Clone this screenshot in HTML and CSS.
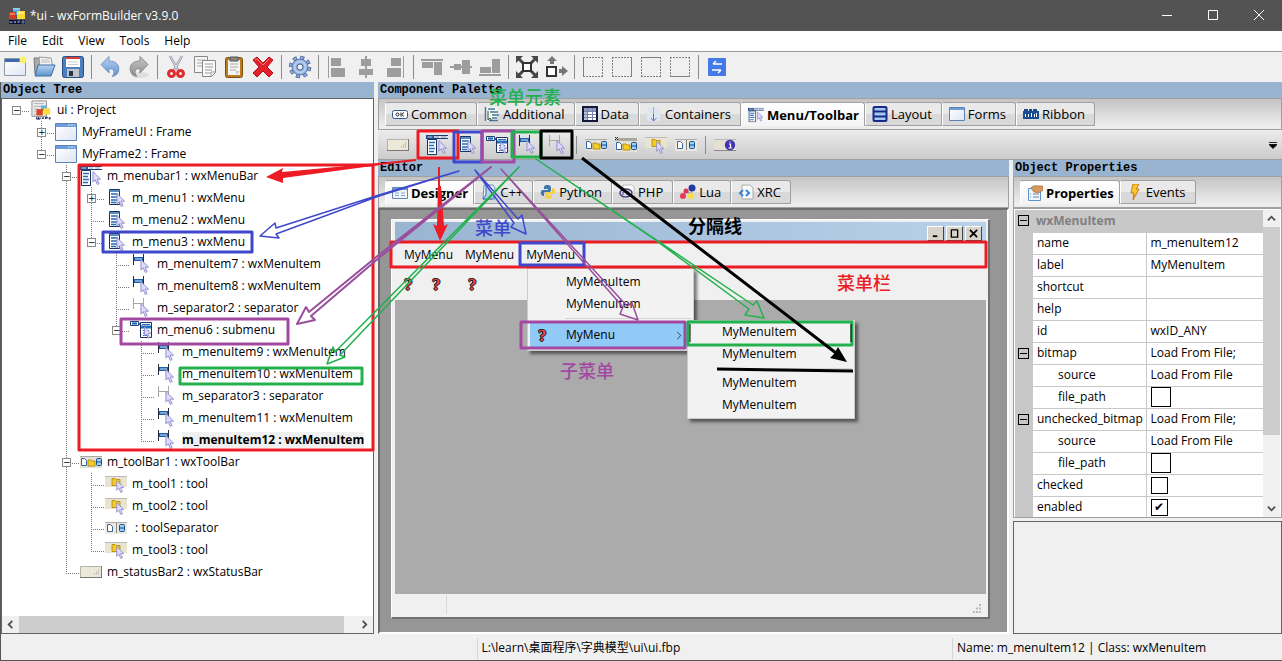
FILE: index.html
```html
<!DOCTYPE html>
<html lang="en">
<head>
<meta charset="utf-8">
<title>*ui - wxFormBuilder v3.9.0</title>
<link rel="stylesheet" href="styles.css">
</head>
<body>
<svg class="defs" aria-hidden="true">
  <defs>
    <linearGradient id="gBlue" x1="0" y1="0" x2="0" y2="1"><stop offset="0" stop-color="#b9d3f0"/><stop offset="1" stop-color="#5f93cf"/></linearGradient>
    <linearGradient id="gGrey" x1="0" y1="0" x2="0" y2="1"><stop offset="0" stop-color="#c8c8c8"/><stop offset="1" stop-color="#8c8c8c"/></linearGradient>
    <linearGradient id="gPaper" x1="0" y1="0" x2="1" y2="1"><stop offset="0" stop-color="#ffffff"/><stop offset="1" stop-color="#dfe6f4"/></linearGradient>
    <symbol id="cursor" viewBox="0 0 8 12"><path d="M.5 .5v9l2-2 1.700 4 1.600-.700-1.700-3.800h3z" fill="#dcdaff" stroke="#8f8cc8" stroke-width=".8"/></symbol>
    <symbol id="blocks" viewBox="0 0 16 16"><path d="M4 0h7v7H4z" fill="#4da3e0"/><path d="M0 4h7v7H0z" fill="#d83a1e"/><path d="M8 3h8v8H8z" fill="#fbd92c"/><path d="M4 0h7v2H4z" fill="#8fcaf0"/><path d="M9 4h6v2H9z" fill="#fff08a"/><path d="M1 5h5v2H1z" fill="#f07a5c"/><path d="M0 12h16v4H0z" fill="#0d1232"/><path d="M1 13v2l1-1 1 1v-2M5 13l2 2m0-2-2 2M9 15v-2h2m-2 1h2M13 13v2h2v-2z" fill="none" stroke="#9fa6d8" stroke-width=".7"/></symbol>
    <symbol id="project" viewBox="0 0 22 22"><path d="M1 1h16v17H1z" fill="#eee" stroke="#888"/><path d="M3 4h11M3 7h8M3 10h5M3 13h5M3 16h4" stroke="#aaa"/><path d="M11 6h6v6h-6z" fill="#5fb4e6"/><path d="M6 10h7v7H6z" fill="#d94424"/><path d="M14 9h7v7h-7z" fill="#fadb3a"/><path d="M6 19v2h2v-2 2h2v-2M12 19l2 2m0-2-2 2M16 19v2m0-2h2v1h-2M20 19v2h1v-2" stroke="#11164e" fill="none"/></symbol>
    <symbol id="frame" viewBox="0 0 22 18"><path d="M.5 .5h21v17H.5z" fill="url(#gPaper)" stroke="#5b82b8"/><path d="M1 1h20v3H1z" fill="#6f9bd6"/><path d="M13 2h2m1 0h2m1 0h1" stroke="#dcebff"/></symbol>
    <symbol id="menubar" viewBox="0 0 22 20"><path d="M0 0h8v4H0z" fill="#1c4a8c"/><path d="M1.500 2h5" stroke="#cfe0f2"/><path d="M8 .5h14M8 3.500h14" stroke="#1b3a70"/><path d="M9 2h4m2 0h5" stroke="#7fa3cc"/><path d="M1.500 4.500h9v15h-9z" fill="#fff" stroke="#17305e"/><path d="M3 7.500h6M3 10.500h5M3 13.500h6M3 16.500h5" stroke="#2b6cb4" stroke-width="1.500"/><use href="#cursor" x="12" y="5" width="10" height="14"/></symbol>
    <symbol id="menu" viewBox="0 0 22 20"><path d="M4.500 1.500h10v15h-10z" fill="#fff" stroke="#17305e"/><path d="M4 3h11M6 6h7M6 9h6M6 12h7M6 14.500h5" stroke="#2468b0" stroke-width="1.500"/><use href="#cursor" x="11" y="5" width="10" height="14"/></symbol>
    <symbol id="submenu" viewBox="0 0 22 20"><path d="M.5 1.500h8v4h-8z" fill="#fff" stroke="#1b3f7d"/><path d="M2 3.500h5M8 4h3" stroke="#1b5aa6" stroke-width="2"/><path d="M10.500 2.500h11v15h-11z" fill="#fff" stroke="#17305e"/><path d="M11 7h10" stroke="#246fc0" stroke-width="3"/><path d="M12 4.500h8M13 10.500h6M13 13h6M13 15.500h6" stroke="#2468b0"/><use href="#cursor" x="14" y="6" width="8" height="13"/></symbol>
    <symbol id="item" viewBox="0 0 22 20"><path d="M3.500 0v11M13.500 0v11" stroke="#222b3a"/><path d="M4 5h9" stroke="#1c5fa8" stroke-width="4"/><path d="M5 5h7" stroke="#d6e6f5"/><use href="#cursor" x="10" y="5" width="10" height="14"/></symbol>
    <symbol id="separator" viewBox="0 0 22 20"><path d="M3.500 0v11M13.500 0v11M4 5.500h9" stroke="#aaa89c"/><use href="#cursor" x="10" y="5" width="10" height="14"/></symbol>
    <symbol id="toolbar" viewBox="0 0 22 12"><path d="M0 0h22v12H0z" fill="#e4e1d3"/><path d="M0 .5h22" stroke="#aaa"/><path d="M1.500 2.500h3l2 2v5h-5z" fill="#fff" stroke="#3565a4"/><path d="M8 4h3l1 1h3v5H8z" fill="#f5ce22" stroke="#a8800b" stroke-width=".8"/><rect x="16.500" y="2.500" width="5" height="7" rx="1" fill="#9fd0f0" stroke="#174b92"/><path d="M17 6h4" stroke="#174b92"/></symbol>
    <symbol id="tool" viewBox="0 0 22 18"><path d="M0 1h22v11H0z" fill="#e8e4d0"/><path d="M0 1.500h22" stroke="#bbb"/><path d="M7 3.500h3l1 1h4v6H7z" fill="#f3cc28" stroke="#b08400" stroke-width=".8"/><use href="#cursor" x="11" y="5" width="9" height="13"/></symbol>
    <symbol id="toolsep" viewBox="0 0 22 12"><path d="M0 0h22v12H0z" fill="#eceadf"/><path d="M0 .5h22" stroke="#aaa"/><path d="M2.500 2.500h3l2 2v5h-5z" fill="#fff" stroke="#3565a4"/><path d="M11.500 1v10" stroke="#888"/><rect x="14.500" y="2.500" width="5" height="7" rx="1" fill="#9fd0f0" stroke="#174b92"/><path d="M15 6h4" stroke="#174b92"/></symbol>
    <symbol id="statusbar" viewBox="0 0 22 12"><path d="M.5 .5h21v11H.5z" fill="#ece9d8" stroke="#b5b3a5"/><path d="M0 11.500h22M21.500 0v12" stroke="#777"/><path d="M18 4h1M16 6h1m1 0h1M14 8h1m1 0h1m1 0h1" stroke="#999"/></symbol>
    <symbol id="info" viewBox="0 0 22 12"><path d="M0 0h22v12H0z" fill="#e4e1d3"/><path d="M0 .5h22" stroke="#bbb"/><path d="M0 11.500h22" stroke="#888"/><circle cx="16" cy="6" r="5.200" fill="#4036b4"/><path d="M15 5h1.500v4M16 2.500v1M14.500 9h3.500" stroke="#fff" stroke-width="1.200" fill="none"/></symbol>
  </defs>
</svg>

<header class="titlebar">
  <svg class="i16" viewBox="0 0 16 16"><use href="#blocks"/></svg>
  <h1>*ui - wxFormBuilder v3.9.0</h1>
  <button class="win" aria-label="Minimize"><svg viewBox="0 0 12 12"><path d="M1 5.500h10"/></svg></button>
  <button class="win" aria-label="Maximize"><svg viewBox="0 0 12 12"><path d="M1.500 .5h9v9h-9z"/></svg></button>
  <button class="win" aria-label="Close"><svg viewBox="0 0 12 12"><path d="m1 0 10 10M11 0 1 10"/></svg></button>
</header>
<nav class="menubar"><button>File</button><button>Edit</button><button>View</button><button>Tools</button><button>Help</button></nav>

<div class="toolbar">
  <button aria-label="New"><svg viewBox="0 0 24 24"><path d="M1.500 3.500h21v17h-21z" fill="url(#gPaper)" stroke="#8e97a8"/><path d="M2 4h20v3H2z" fill="#3d68ae"/><circle cx="20" cy="5" r="3.500" fill="#f7f26a"/></svg></button>
  <button aria-label="Open"><svg viewBox="0 0 24 24"><path d="M2 3h8l2 3h7v13H3z" fill="#aaa" stroke="#777"/><path d="m7 2 12 1 2 10H8z" fill="#f4f4f4" stroke="#999"/><path d="M9 5h8M9 7h9" stroke="#bbb"/><path d="M6 10h17l-4 11H3z" fill="url(#gBlue)" stroke="#3c6eaa"/></svg></button>
  <button aria-label="Save"><svg viewBox="0 0 24 24"><rect x="1.500" y="1.500" width="21" height="21" rx="2" fill="#4b7fc0" stroke="#274e87"/><path d="M5 2h14v10H5z" fill="#fff"/><path d="M5 2h14v2H5z" fill="#e23b35"/><path d="M7 7h10M7 9.500h10" stroke="#ccc"/><path d="M6 14h12v8H6z" fill="#bfc4ca"/><path d="M8 16h4v5H8z" fill="#27344a"/></svg></button>
  <hr>
  <button aria-label="Undo"><svg viewBox="0 0 24 24"><path d="m3 9.500 8-8V6c7 0 11 4 9.500 10-.500 3-3 5-6.500 5.500 3-3 3-8-3-8V18z" fill="url(#gBlue)" stroke="#7398c5"/></svg></button>
  <button aria-label="Redo"><svg viewBox="0 0 24 24"><ellipse cx="13" cy="20" rx="9" ry="3" fill="#ddd"/><path d="m21 9.500-8-8V6C6 6 2 10 3.500 16c.5 3 3 5 6.500 5.500-3-3-3-8 3-8V18z" fill="url(#gGrey)" stroke="#8c8c8c"/></svg></button>
  <hr>
  <button aria-label="Cut"><svg viewBox="0 0 24 24"><path d="m6 1 8 14M18 1l-8 14" stroke="#8a929c" stroke-width="2.500"/><path d="m6 1 8 14M18 1l-8 14" stroke="#e4e8ec"/><ellipse cx="7.500" cy="18.500" rx="3" ry="3" fill="none" stroke="#e02b2f" stroke-width="3"/><ellipse cx="16.500" cy="18.500" rx="3" ry="3" fill="none" stroke="#e02b2f" stroke-width="3"/></svg></button>
  <button aria-label="Copy"><svg viewBox="0 0 24 24"><path d="M1.500 1.500h13v16h-13z" fill="#f5f5f5" stroke="#888"/><path d="M4 5h8M4 8h8M4 11h8" stroke="#aaa"/><path d="M9.500 5.500h13v12l-4 4h-9z" fill="#fafafa" stroke="#888"/><path d="M12 9h8M12 12h8M12 15h7M12 18h5M18 21v-4h4" stroke="#999" fill="none"/></svg></button>
  <button aria-label="Paste"><svg viewBox="0 0 24 24"><rect x="3.500" y="2.500" width="17" height="20" rx="2" fill="#ba7d20" stroke="#7b4d08"/><path d="M6 5h12v15H6z" fill="#f4f4f0"/><path d="M8 2h8v4H8z" fill="#888" stroke="#555"/><path d="M8 9h8M8 12h8M8 15h6" stroke="#aaa"/><path d="M14 20v-4h4z" fill="#ccc"/></svg></button>
  <button aria-label="Delete"><svg viewBox="0 0 24 24"><path d="m2 5 4-3 6 6 6-6 4 3-6 7 6 6-4 4-6-6-6 6-4-4 6-6z" fill="#e1222a" stroke="#b40e16"/><path d="m4 5 2-1 6 6 6-6" stroke="#f58084" fill="none"/></svg></button>
  <hr>
  <button aria-label="Preferences"><svg viewBox="0 0 24 24"><circle cx="12" cy="12" r="9.500" fill="none" stroke="#4a689e" stroke-width="3.500" stroke-dasharray="4 3.460"/><circle cx="12" cy="12" r="9.500" fill="none" stroke="#94b0dd" stroke-width="2" stroke-dasharray="2.500 4.960" stroke-dashoffset="-.7"/><circle cx="12" cy="12" r="8" fill="#94b0dd" stroke="#5877ae"/><circle cx="12" cy="12" r="5.500" fill="none" stroke="#b9cdee" stroke-width="2"/><circle cx="12" cy="12" r="3" fill="#eee" stroke="#48679f"/></svg></button>
  <hr>
  <button aria-label="Align left"><svg viewBox="0 0 24 24" fill="#9d9d9d"><path d="M3 1h1v22H3zM6 3h10v8H6zM6 13h14v9H6z"/></svg></button>
  <button aria-label="Center horizontally"><svg viewBox="0 0 24 24" fill="#9d9d9d"><path d="M11 1h2v22h-2zM7 4h10v7H7zM5 14h14v6H5z"/></svg></button>
  <button aria-label="Align right"><svg viewBox="0 0 24 24" fill="#9d9d9d"><path d="M20 1h1v22h-1zM8 3h10v8H8zM4 13h14v9H4z"/></svg></button>
  <hr>
  <button aria-label="Align top"><svg viewBox="0 0 24 24" fill="#9d9d9d"><path d="M1 4h22v2H1zM2 7h11v6H2zM14 7h8v13h-8z"/></svg></button>
  <button aria-label="Center vertically"><svg viewBox="0 0 24 24" fill="#9d9d9d"><path d="M1 11h22v2H1zM5 9h7v6H5zM13 5h8v14h-8z"/></svg></button>
  <button aria-label="Align bottom"><svg viewBox="0 0 24 24" fill="#9d9d9d"><path d="M1 19h22v2H1zM2 12h11v6H2zM14 4h8v14h-8z"/></svg></button>
  <hr>
  <button aria-label="Expand"><svg viewBox="0 0 24 24"><path d="m3 3 18 18M21 3 3 21" stroke="#474747" stroke-width="3"/><path d="M1 1h7L1 8zM23 1v7l-7-7zM1 23v-7l7 7zM23 23h-7l7-7z" fill="#474747"/><path d="M8 8h8v8H8z" fill="#fff" stroke="#333" stroke-width="2"/></svg></button>
  <button aria-label="Stretch"><svg viewBox="0 0 24 24"><path d="M3 12h9v9H3z" fill="#fff" stroke="#333" stroke-width="2"/><path d="M6 9V6H3l5-5 5 5h-3v3zM15 14h3v-3l6 5-6 5v-3h-3z" fill="#777"/></svg></button>
  <hr>
  <button aria-label="Left border"><svg viewBox="0 0 24 24" fill="none" stroke="#808080"><path d="M2 2.500h20M2 21.500h20M21.500 2v20" stroke-dasharray="2 1"/><path d="M2.500 2v20"/></svg></button>
  <button aria-label="Right border"><svg viewBox="0 0 24 24" fill="none" stroke="#808080"><path d="M2 2.500h20M2 21.500h20M2.500 2v20" stroke-dasharray="2 1"/><path d="M21.500 2v20"/></svg></button>
  <button aria-label="Top border"><svg viewBox="0 0 24 24" fill="none" stroke="#808080"><path d="M2.500 2v20M2 21.500h20M21.500 2v20" stroke-dasharray="2 1"/><path d="M2 2.500h20"/></svg></button>
  <button aria-label="Bottom border"><svg viewBox="0 0 24 24" fill="none" stroke="#808080"><path d="M2.500 2v20M2 2.500h20M21.500 2v20" stroke-dasharray="2 1"/><path d="M2 21.500h20"/></svg></button>
  <hr>
  <button aria-label="Swap"><svg viewBox="0 0 24 24"><rect x="3" y="3" width="18" height="18" rx="1" fill="#4479e8"/><path d="M17 9H8m3-3L8 9M7 15h9m-3 3 3-3" stroke="#fff" stroke-width="1.500" fill="none"/></svg></button>
</div>

<main class="workspace">
  <section class="pane left">
    <h2>Object Tree</h2>
    <div class="treebox">
      <ul class="tree">
        <li class="root"><div class="row"><button class="exp" aria-label="Collapse">−</button><svg class="ic" viewBox="0 0 22 22"><use href="#project"/></svg><span>ui : Project</span></div>
          <ul>
            <li><div class="row"><button class="exp" aria-label="Expand">+</button><svg class="ic" viewBox="0 0 22 18"><use href="#frame"/></svg><span>MyFrameUI : Frame</span></div></li>
            <li><div class="row"><button class="exp" aria-label="Collapse">−</button><svg class="ic" viewBox="0 0 22 18"><use href="#frame"/></svg><span>MyFrame2 : Frame</span></div>
              <ul>
                <li><div class="row"><button class="exp" aria-label="Collapse">−</button><svg class="ic" viewBox="0 0 22 20"><use href="#menubar"/></svg><span>m_menubar1 : wxMenuBar</span></div>
                  <ul>
                    <li><div class="row"><button class="exp" aria-label="Expand">+</button><svg class="ic" viewBox="0 0 22 20"><use href="#menu"/></svg><span>m_menu1 : wxMenu</span></div></li>
                    <li><div class="row leaf"><svg class="ic" viewBox="0 0 22 20"><use href="#menu"/></svg><span>m_menu2 : wxMenu</span></div></li>
                    <li><div class="row"><button class="exp" aria-label="Collapse">−</button><svg class="ic" viewBox="0 0 22 20"><use href="#menu"/></svg><span>m_menu3 : wxMenu</span></div>
                      <ul>
                        <li><div class="row leaf"><svg class="ic" viewBox="0 0 22 20"><use href="#item"/></svg><span>m_menuItem7 : wxMenuItem</span></div></li>
                        <li><div class="row leaf"><svg class="ic" viewBox="0 0 22 20"><use href="#item"/></svg><span>m_menuItem8 : wxMenuItem</span></div></li>
                        <li><div class="row leaf"><svg class="ic" viewBox="0 0 22 20"><use href="#separator"/></svg><span>m_separator2 : separator</span></div></li>
                        <li><div class="row"><button class="exp" aria-label="Collapse">−</button><svg class="ic" viewBox="0 0 22 20"><use href="#submenu"/></svg><span>m_menu6 : submenu</span></div>
                          <ul>
                            <li><div class="row leaf"><svg class="ic" viewBox="0 0 22 20"><use href="#item"/></svg><span>m_menuItem9 : wxMenuItem</span></div></li>
                            <li><div class="row leaf"><svg class="ic" viewBox="0 0 22 20"><use href="#item"/></svg><span>m_menuItem10 : wxMenuItem</span></div></li>
                            <li><div class="row leaf"><svg class="ic" viewBox="0 0 22 20"><use href="#separator"/></svg><span>m_separator3 : separator</span></div></li>
                            <li><div class="row leaf"><svg class="ic" viewBox="0 0 22 20"><use href="#item"/></svg><span>m_menuItem11 : wxMenuItem</span></div></li>
                            <li><div class="row leaf"><svg class="ic" viewBox="0 0 22 20"><use href="#item"/></svg><span class="current">m_menuItem12 : wxMenuItem</span></div></li>
                          </ul>
                        </li>
                      </ul>
                    </li>
                  </ul>
                </li>
                <li><div class="row"><button class="exp" aria-label="Collapse">−</button><svg class="ic" viewBox="0 0 22 12"><use href="#toolbar"/></svg><span>m_toolBar1 : wxToolBar</span></div>
                  <ul>
                    <li><div class="row leaf"><svg class="ic" viewBox="0 0 22 18"><use href="#tool"/></svg><span>m_tool1 : tool</span></div></li>
                    <li><div class="row leaf"><svg class="ic" viewBox="0 0 22 18"><use href="#tool"/></svg><span>m_tool2 : tool</span></div></li>
                    <li><div class="row leaf"><svg class="ic" viewBox="0 0 22 12"><use href="#toolsep"/></svg><span>&nbsp;: toolSeparator</span></div></li>
                    <li><div class="row leaf"><svg class="ic" viewBox="0 0 22 18"><use href="#tool"/></svg><span>m_tool3 : tool</span></div></li>
                  </ul>
                </li>
                <li><div class="row leaf"><svg class="ic" viewBox="0 0 22 12"><use href="#statusbar"/></svg><span>m_statusBar2 : wxStatusBar</span></div></li>
              </ul>
            </li>
          </ul>
        </li>
      </ul>
      <div class="hscroll">
        <button aria-label="Scroll left"><svg viewBox="0 0 10 10"><path d="M7 1 3 5l4 4"/></svg></button>
        <div class="thumb"></div>
        <button aria-label="Scroll right"><svg viewBox="0 0 10 10"><path d="m3 1 4 4-4 4"/></svg></button>
      </div>
    </div>
  </section>

  <div class="rightside">
    <section class="pane palette">
      <h2>Component Palette</h2>
      <div class="tabs" role="tablist">
        <button role="tab"><svg viewBox="0 0 16 16"><rect x=".5" y="4.500" width="15" height="8" rx="2" fill="#fff" stroke="#2c5596"/><circle cx="5.500" cy="8.500" r="1.500" fill="none" stroke="#222"/><path d="M9 6.500v4M12 6.500l-2.500 2 2.500 2" stroke="#222" fill="none"/></svg>Common</button>
        <button role="tab"><svg viewBox="0 0 16 16"><path d="M1 1h12v14H1z" fill="#f6f7ef"/><path d="M1.500 1v14M4 3h7M6 6h8M8 9h7M8 12h5M5 14.500h9" stroke="#45799f" stroke-width="1.500" fill="none"/><path d="M4 5v9l2-2 2 3" stroke="#354c28" fill="none"/></svg>Additional</button>
        <button role="tab"><svg viewBox="0 0 16 16"><path d="M1 1h14v14H1z" fill="#fff" stroke="#111a38" stroke-width="2"/><path d="M2 2h12v3H2z" fill="#929bc0"/><path d="M2 5h3v9H2z" fill="#bcc2db"/><path d="M5.500 2v12M10.500 2v12M2 5.500h12M2 8.500h12M2 11.500h12" stroke="#7782aa"/></svg>Data</button>
        <button role="tab"><svg viewBox="0 0 16 16"><path d="M1 1h13v14H1z" fill="#dfe6f0"/><path d="M7.500 1v7" stroke="#9cacca"/><path d="M7.500 8v7M5 12l2.500 3 3-3" stroke="#4b79bb" fill="none"/></svg>Containers</button>
        <button role="tab" class="active" aria-selected="true"><svg viewBox="0 0 22 20"><use href="#menubar"/></svg>Menu/Toolbar</button>
        <button role="tab"><svg viewBox="0 0 16 16"><rect x="1.500" y="1" width="13" height="14" rx="1" fill="#a9c7f5" stroke="#172c87" stroke-width="2"/><path d="M1 5.500h14M1 10.500h14" stroke="#172c87" stroke-width="2"/></svg>Layout</button>
        <button role="tab"><svg viewBox="0 0 16 16"><path d="M.5 1.500h15v13H.5z" fill="url(#gPaper)" stroke="#5b82b8"/><path d="M1 2h14v2H1z" fill="#6f9bd6"/></svg>Forms</button>
        <button role="tab"><svg viewBox="0 0 16 16"><path d="M0 5h1V3h4v2h1V3h3v2h1V3h4v2h2v8H0z" fill="#1a4d90"/><path d="M2 8h1v3H2zM5 8h1v3H5zM8 7h1v4H8zM11 8h1v3h-1zM13 7h1v4h-1z" fill="#fff"/></svg>Ribbon</button>
      </div>
      <div class="components">
        <button aria-label="Status bar"><svg viewBox="0 0 22 12"><use href="#statusbar"/></svg></button>
        <hr>
        <button aria-label="Menu bar"><svg viewBox="0 0 22 20"><use href="#menubar"/></svg></button>
        <button aria-label="Menu"><svg viewBox="0 0 22 20"><use href="#menu"/></svg></button>
        <button aria-label="Submenu"><svg viewBox="0 0 22 20"><use href="#submenu"/></svg></button>
        <button aria-label="Menu item"><svg viewBox="0 0 22 20"><use href="#item"/></svg></button>
        <button aria-label="Separator"><svg viewBox="0 0 22 20"><use href="#separator"/></svg></button>
        <hr>
        <button aria-label="Tool bar"><svg viewBox="0 0 22 12"><use href="#toolbar"/></svg></button>
        <button aria-label="AUI tool bar"><svg viewBox="0 0 22 16"><path d="M3 1h19v2H3z" fill="#aaa79a"/><path d="m0 0 3 3m0-3L0 3" stroke="#222"/><use href="#toolbar" y="3" width="22" height="12"/></svg></button>
        <button aria-label="Tool"><svg viewBox="0 0 22 18"><use href="#tool"/></svg></button>
        <button aria-label="Tool separator"><svg viewBox="0 0 22 12"><use href="#toolsep"/></svg></button>
        <hr>
        <button aria-label="Info bar"><svg viewBox="0 0 22 12"><use href="#info"/></svg></button>
        <button class="more" aria-label="More"><svg viewBox="0 0 8 8"><path d="M0 1.500h8M0 3.500h8L4 7.500z" fill="#000" stroke="#000" stroke-width=".8"/></svg></button>
      </div>
    </section>

    <div class="lower">
      <section class="pane editor">
        <h2>Editor</h2>
        <div class="tabs" role="tablist">
          <button role="tab" class="active" aria-selected="true"><svg viewBox="0 0 16 16"><path d="M.5 2.500h15v11H.5z" fill="#edf4fc" stroke="#6286b8"/><path d="M1 3h14v2H1z" fill="#6f98ce"/><path d="M3 8h4M3 10.500h4M9 8h4M9 10.500h4" stroke="#8aa6cb"/></svg>Designer</button>
          <button role="tab"><svg viewBox="0 0 16 16"><path d="M3 1h9l2 3v11H2z" fill="#eef4fa" stroke="#6090c0"/><path d="M5 1v10l-3 4h9l3-3" fill="#b5d3ec" stroke="#376aa1"/></svg>C++</button>
          <button role="tab"><svg viewBox="0 0 16 16"><path d="M8 1c-4 0-4 1-4 4h4v1H3c-3 0-3 5 0 6h1V9c0-2 6 0 7-2V4c0-2-1-3-3-3" fill="#3e76ad"/><path d="M8 15c4 0 4-1 4-4H8v-1h5c3 0 3-5 0-6h-1v3c0 2-6 0-7 2v3c0 2 1 3 3 3" fill="#f5cf45"/></svg>Python</button>
          <button role="tab"><svg viewBox="0 0 16 16"><path d="M4 1h9l2 2v12H4z" fill="#fff" stroke="#bbb"/><ellipse cx="7" cy="9" rx="6" ry="4" fill="#e0def0" stroke="#45437d" stroke-width="1.500"/><path d="M4 11V8h2M8 11V8h2" stroke="#45437d" fill="none"/></svg>PHP</button>
          <button role="tab"><svg viewBox="0 0 16 16"><path d="m3 12 4-6 3 5 3-8" stroke="#888" fill="none"/><circle cx="3" cy="12" r="3" fill="#e63a58"/><circle cx="6" cy="7" r="2.500" fill="#d83358"/><circle cx="12" cy="4" r="3.500" fill="#2237a4"/><circle cx="11" cy="12" r="3" fill="#f5e13b"/></svg>Lua</button>
          <button role="tab"><svg viewBox="0 0 16 16"><path d="M4 1h8l3 3v11H4z" fill="#fafafa" stroke="#aaa"/><path d="M5 6 2 9l3 3M8 6l3 3-3 3" fill="none" stroke="#3984d0" stroke-width="2"/></svg>XRC</button>
        </div>
        <div class="canvas">
          <div class="frame">
            <div class="frametitle">
              <button aria-label="Minimize"><svg viewBox="0 0 10 10"><path d="M2 8h5"/></svg></button>
              <button aria-label="Maximize"><svg viewBox="0 0 10 10"><path d="M1 1h8M1.500 1v8h7V1" stroke-width="1.500"/></svg></button>
              <button aria-label="Close"><svg viewBox="0 0 10 10"><path d="m1 1 8 8M9 1 1 9"/></svg></button>
            </div>
            <div class="framemenu"><button>MyMenu</button><button>MyMenu</button><button>MyMenu</button></div>
            <div class="frametools"><b class="q">?</b><b class="q">?</b><b class="q last">?</b></div>
            <div class="framebody"></div>
            <div class="framestatus"><span></span><svg viewBox="0 0 10 10"><path d="M7 1h2M4 4.500h2M7 4.500h2M1 8h2M4 8h2M7 8h2" stroke="#bbb" stroke-width="2"/></svg></div>
            <div class="popup first">
              <button><i></i>MyMenuItem</button>
              <button><i></i>MyMenuItem</button>
              <hr>
              <button class="hot"><i class="q">?</i>MyMenu<svg viewBox="0 0 6 10"><path d="m1 1 4 4-4 4"/></svg></button>
            </div>
            <div class="popup second">
              <button><i></i>MyMenuItem</button>
              <button><i></i>MyMenuItem</button>
              <hr>
              <button><i></i>MyMenuItem</button>
              <button><i></i>MyMenuItem</button>
            </div>
          </div>
        </div>
      </section>

      <section class="pane props">
        <h2>Object Properties</h2>
        <div class="tabs" role="tablist">
          <button role="tab" class="active" aria-selected="true"><svg viewBox="0 0 16 16"><path d="M1.500 3.500h12v12h-12z" fill="#eef5fc" stroke="#5a94cc"/><path d="M3 9h1M6 9h6M3 12h1M6 12h6" stroke="#789"/><path d="M4 3c2-3 6-2 8-2h4v4c-3 3-5 3-9 2z" fill="#d69a5d" stroke="#a2683a" stroke-width=".7"/></svg>Properties</button>
          <button role="tab"><svg viewBox="0 0 16 16"><path d="M6 0h6l-3 5h3L6 16l1-7H4z" fill="#fbc92e" stroke="#c77a16"/></svg>Events</button>
        </div>
        <div class="grid">
          <table>
            <colgroup><col class="c-gutter"><col class="c-name"><col></colgroup>
            <tbody>
              <tr class="cat"><td><button class="box" aria-label="Collapse"></button></td><th colspan="2">wxMenuItem</th></tr>
              <tr><td></td><th>name</th><td>m_menuItem12</td></tr>
              <tr><td></td><th>label</th><td>MyMenuItem</td></tr>
              <tr><td></td><th>shortcut</th><td></td></tr>
              <tr><td></td><th>help</th><td></td></tr>
              <tr><td></td><th>id</th><td>wxID_ANY</td></tr>
              <tr><td><button class="box" aria-label="Collapse"></button></td><th>bitmap</th><td>Load From File;</td></tr>
              <tr><td></td><th class="sub">source</th><td>Load From File</td></tr>
              <tr><td></td><th class="sub"><label for="p1">file_path</label></th><td><input id="p1" class="big" type="checkbox"></td></tr>
              <tr><td><button class="box" aria-label="Collapse"></button></td><th>unchecked_bitmap</th><td>Load From File;</td></tr>
              <tr><td></td><th class="sub">source</th><td>Load From File</td></tr>
              <tr><td></td><th class="sub"><label for="p2">file_path</label></th><td><input id="p2" class="big" type="checkbox"></td></tr>
              <tr><td></td><th><label for="p3">checked</label></th><td><input id="p3" type="checkbox"></td></tr>
              <tr><td></td><th><label for="p4">enabled</label></th><td><input id="p4" type="checkbox" checked></td></tr>
            </tbody>
          </table>
          <div class="vscroll">
            <button aria-label="Scroll up"><svg viewBox="0 0 10 10"><path d="m1 7 4-4 4 4"/></svg></button>
            <div class="thumb"></div>
            <button aria-label="Scroll down"><svg viewBox="0 0 10 10"><path d="m1 3 4 4 4-4"/></svg></button>
          </div>
        </div>
        <div class="help"></div>
      </section>
    </div>
  </div>
</main>

<footer class="status"><span></span><span>L:\learn\桌面程序\字典模型\ui\ui.fbp</span><span>Name: m_menuItem12 | Class: wxMenuItem</span></footer>

<svg class="notes" width="1282" height="661" viewBox="0 0 1282 661" fill="none" stroke-linejoin="round">
  <g stroke="#ed1c24" stroke-width="3">
    <path d="M79 165h294v285H79zM418 131h40v27h-40zM391 242h595v25H391z"/>
    <path d="M416 160 370 165 283 174" stroke-width="2"/><path d="M439 167v50" stroke-width="2"/>
  </g>
  <path d="m266 177 17-9-1 4 98-9v2l-97 13v5zM440 241l-7-17 4 2 1-40h3l3 40 4-2z" fill="#ed1c24"/>
  <g stroke="#3f48cc" stroke-width="3"><path d="M103 232h149v20H103zM454 132h28v30h-28zM520 243h64v22h-64z"/></g>
  <g stroke="#3f48cc" stroke-width="1.500">
    <path d="m459 171-80 24-103 33-1-5-15 13 19 2-3-4 103-38z"/>
    <path d="m475 170 39 53-3 4 15 7-4-19-4 4z"/>
  </g>
  <g stroke="#a349a4" stroke-width="3"><path d="M121 319h167v25H121zM482 131h32v31h-32zM521 322h164v26H521z"/></g>
  <g stroke="#984f9c" stroke-width="2">
    <path d="m491 167-111 87-71 58-3-5-9 17 18-4-4-4 69-59z"/>
    <path d="m501 169 122 138-3 7 18 6-6-17-5 3z" stroke-width="1.500"/>
  </g>
  <g stroke="#22b14c" stroke-width="3"><path d="M180 368h182v16H180zM512 132h29v25h-29zM688 322h164v23H688z"/></g>
  <g stroke="#22b14c" stroke-width="1.500">
    <path d="m519 167-184 185-2-5-6 17 18-7-5-2z"/>
    <path d="m536 159 118 80 95 70-4 6 19 3-7-17-4 4z"/>
  </g>
  <path d="M541 131h31v27h-31zM582 158l254 195" stroke="#000" stroke-width="3"/>
  <path d="M717 369l136 2" stroke="#000" stroke-width="3"/>
  <path d="m847 362-17-4 4-4 4-7z" fill="#000"/>
  <path d="M690 324v18M851 324v18" stroke="#000" stroke-width="1"/>
  <g class="cn">
    <text x="489" y="104" fill="#22b14c">菜单元素</text>
    <text x="475" y="235" fill="#3f48cc">菜单</text>
    <text x="688" y="233" fill="#000" font-weight="bold">分隔线</text>
    <text x="837" y="290" fill="#ed1c24">菜单栏</text>
    <text x="560" y="378" fill="#a349a4">子菜单</text>
  </g>
</svg>
</body>
</html>
```
FILE: styles.css
```css
* { box-sizing: border-box; }
body {
  margin: 0; height: 100vh; display: flex; flex-direction: column; overflow: hidden;
  position: relative; background: #f0f0f0; color: #000;
  font: 12px/16px "Open Sans", "Noto Sans CJK SC", sans-serif;
}
button { font: inherit; color: inherit; background: none; border: 0; padding: 0; margin: 0; }
h1, h2, ul { margin: 0; padding: 0; font: inherit; }
ul { list-style: none; }
hr { border: 0; margin: 0; }
svg { display: block; flex: none; }
.defs { position: absolute; width: 0; height: 0; }

.titlebar { height: 31px; flex: none; background: #535353; color: #fff; display: flex; align-items: center; padding-left: 9px; }
.titlebar h1 { flex: 1; margin-left: 5px; }
.i16 { width: 16px; height: 16px; }
.win { width: 46px; height: 31px; display: grid; place-items: center; }
.win svg { width: 12px; height: 12px; fill: none; stroke: #fff; }
.menubar { height: 21px; flex: none; display: flex; gap: 15px; padding-left: 8px; background: #fff; border-bottom: 1px solid #999; align-items: center; }

.toolbar { height: 30px; flex: none; display: flex; align-items: center; }
.toolbar button { width: 29px; display: grid; place-items: center; }
.toolbar svg { width: 24px; height: 24px; }
.toolbar hr, .components hr { width: 8px; height: 24px; background: linear-gradient(#8c8c8c, #8c8c8c) center / 1px 100% no-repeat; }

.workspace { flex: 1; min-height: 0; display: flex; gap: 4px; }
.pane { display: flex; flex-direction: column; min-height: 0; }
.pane h2 { height: 16px; flex: none; padding-left: 2px; background: #99b4d1; font: bold 12px/16px "Liberation Mono", monospace; }
.left { width: 374px; border-left: 1px solid #555; }
.treebox { flex: 1; display: flex; flex-direction: column; background: #fff; border: 1px solid #646464; min-height: 0; }
.tree { flex: 1; overflow: hidden; }
.tree ul { padding-left: 25px; }
.tree li { background: repeating-linear-gradient(#777 0 1px, transparent 1px 2px) 14px 0 / 1px 100% no-repeat; }
.tree li:last-child { background-size: 1px 12px; }
.tree li.root { background: none; }
.row { height: 22px; display: flex; align-items: center; padding-left: 10px; background: repeating-linear-gradient(90deg, #777 0 1px, transparent 1px 2px) 14px 12px / 14px 1px no-repeat; }
.row.leaf { padding-left: 28px; }
.row span { margin-left: 5px; white-space: nowrap; }
.exp { width: 9px; height: 9px; margin-right: 9px; border: 1px solid #8a8a8a; background: #fff; font: 9px/7px "DejaVu Sans", sans-serif; display: grid; place-items: center; }
.ic { width: 22px; height: 20px; }
.current { font-weight: bold; background: #f0f0f0; }
.hscroll { height: 17px; display: flex; background: #f0f0f0; }
.hscroll button, .vscroll button { width: 17px; height: 17px; display: grid; place-items: center; }
.hscroll svg, .vscroll svg { width: 9px; height: 9px; fill: none; stroke: #505050; stroke-width: 2; }
.thumb { background: #cdcdcd; }
.hscroll .thumb { flex: 1; margin-right: 12px; }

.rightside { flex: 1; min-width: 0; display: flex; flex-direction: column; }
.tabs { height: 32px; flex: none; display: flex; align-items: flex-end; padding: 0 6px 3px; background: linear-gradient(#ededed, #ededed) 0 100% / 100% 2px no-repeat, linear-gradient(#c4c4c4, #f2f2f2); border: 1px solid #a0a0a0; }
.tabs button { height: 24px; display: flex; align-items: center; gap: 3px; padding: 0 9px 0 6px; border: 1px solid #a0a0a0; border-left-color: #fff; border-radius: 3px 3px 0 0; background: linear-gradient(#e9e9e9 50%, #d9d9d9 50%); font-size: 13px; }
.tabs button.active { background: linear-gradient(#fff, #f4f4f4); font-weight: bold; border-bottom: 0; padding-right: 5px; }
.tabs svg { width: 16px; height: 16px; }
.components { height: 30px; display: flex; align-items: center; padding-left: 5px; background: linear-gradient(#ececec, #cbcbcb); border-bottom: 1px solid #a0a0a0; }
.components button { width: 30px; display: grid; place-items: center; }
.components svg { width: 22px; max-height: 20px; }
.components hr { width: 9px; height: 18px; }
.components .more { width: 18px; margin-left: auto; }
.components .more svg { width: 8px; height: 8px; }

.lower { flex: 1; min-height: 0; display: flex; gap: 4px; }
.editor { flex: 1; min-width: 0; }
.canvas { flex: 1; display: flex; padding: 9px 17px 13px 11px; background: #969696; border: 2px solid #6c6c6c; border-right-color: #fff; border-bottom-color: #fff; }
.frame { flex: 1; position: relative; display: flex; flex-direction: column; padding: 2px 2px 1px 3px; background: #f0f0f0; border: 1px solid #fff; border-right: 2px solid #707070; border-bottom: 2px solid #707070; }
.frametitle { height: 19px; flex: none; display: flex; justify-content: flex-end; align-items: flex-end; gap: 2px; padding-right: 4px; background: linear-gradient(90deg, #99b4d1, #b9d1ea); }
.frametitle button { width: 17px; height: 15px; display: grid; place-items: center; background: #d8d4cc; border: 1px solid #fff; border-right-color: #444; border-bottom-color: #444; }
.frametitle svg { width: 9px; height: 9px; fill: none; stroke: #000; stroke-width: 2; }
.framemenu { height: 27px; flex: none; display: flex; gap: 12px; padding-left: 9px; }
.frametools { height: 32px; flex: none; display: flex; align-items: center; gap: 18px; padding-left: 9px; }
.q { width: 10px; font: bold 17px/17px "Liberation Serif", serif; color: #f04848; text-shadow: 1px 0 #111, -1px 0 #111, 0 1px #111, 0 -1px #111; }
.frametools .last { margin-left: 8px; }
.framebody { flex: 1; background: #ababab; }
.framestatus { height: 22px; flex: none; display: flex; justify-content: space-between; align-items: flex-end; padding: 1px 4px 2px 0; }
.framestatus span { width: 52px; height: 19px; border-right: 1px solid #d7d7d7; }
.framestatus svg { width: 10px; height: 10px; }
.popup { position: absolute; display: flex; flex-direction: column; background: #f2f2f2; border: 1px solid #ccc; padding: 2px; box-shadow: 3px 3px 3px rgba(0, 0, 0, .5); }
.popup button { height: 22px; display: flex; align-items: center; text-align: left; }
.popup button i { width: 10px; margin: 0 18px 0 8px; font-style: normal; }
.popup.first { left: 135px; top: 48px; width: 167px; }
.popup.second { left: 295px; top: 100px; width: 168px; padding-top: 0; }
.popup.second i { margin-right: 14px; }
.popup hr { height: 7px; margin-left: 35px; background: linear-gradient(#d5d5d5, #d5d5d5) 0 50% / 100% 1px no-repeat; }
.popup button.hot { height: 26px; background: #91c9f7; }
.popup svg { width: 6px; height: 9px; margin: 0 9px 0 auto; fill: none; stroke: #333; }

.props { width: 269px; }
.grid { height: 310px; flex: none; display: flex; border: 1px solid #a0a0a0; padding: 1px 1px 0; background: #fff; overflow: hidden; }
table { flex: 1; border-collapse: collapse; table-layout: fixed; width: 0; }
.c-gutter { width: 18px; }
.c-name { width: 113px; }
tr { height: 22px; }
td, th { padding: 0 0 0 4px; font-weight: normal; text-align: left; white-space: nowrap; border-bottom: 1px solid #c8c8c8; overflow: hidden; }
td:first-child { background: #c8c8c8; padding: 0 0 0 3px; }
th + td { border-left: 1px solid #c8c8c8; }
.cat th { background: #c8c8c8; color: #808080; font-weight: bold; padding-left: 3px; }
.sub { padding-left: 25px; }
.box { display: block; width: 11px; height: 11px; border: 1px solid #000; background: linear-gradient(#000, #000) center / 7px 1px no-repeat; }
input { display: grid; place-items: center; appearance: none; width: 17px; height: 17px; margin: 0; border: 1px solid #000; background: #fff; }
input.big { width: 20px; height: 20px; }
input:checked::before { content: "✔"; font: 12px/12px "DejaVu Sans", sans-serif; }
.vscroll { width: 17px; display: flex; flex-direction: column; background: #f0f0f0; }
.vscroll .thumb { flex: 1; margin-bottom: 65px; }
.help { flex: 1; margin-top: 3px; border: 1px solid #646464; }

.status { height: 27px; flex: none; display: grid; grid-template-columns: 1fr 1fr 330px; align-items: center; padding-top: 2px; border-left: 1px solid #555; border-bottom: 1px solid #555; }
.status span { height: 21px; padding-left: 4px; line-height: 20px; }
.status span + span { border-left: 1px solid #d5d5d5; }
.notes { position: absolute; left: 0; top: 0; pointer-events: none; }
.cn { font: 500 18px "Noto Sans CJK SC", sans-serif; }
```
